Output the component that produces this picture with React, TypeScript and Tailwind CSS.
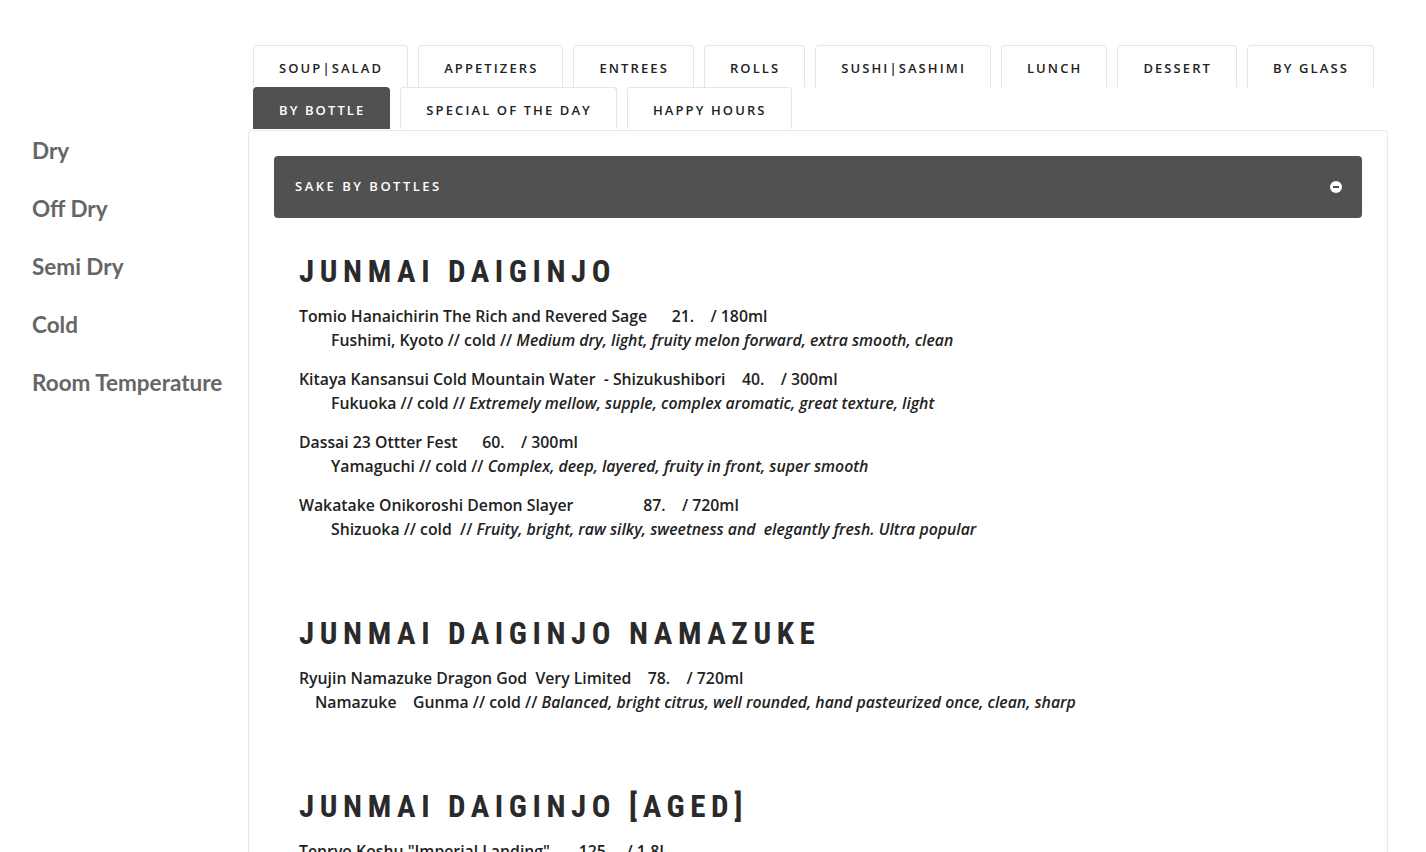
import React from 'react';

const tabs = [
  'SOUP|SALAD',
  'APPETIZERS',
  'ENTREES',
  'ROLLS',
  'SUSHI|SASHIMI',
  'LUNCH',
  'DESSERT',
  'BY GLASS',
  'BY BOTTLE',
  'SPECIAL OF THE DAY',
  'HAPPY HOURS',
];

const filters = ['Dry', 'Off Dry', 'Semi Dry', 'Cold', 'Room Temperature'];

type Item = {
  title: string;
  origin: string;
  notes: string;
  indent?: string;
};

const sections: { name: string; items: Item[] }[] = [
  {
    name: 'JUNMAI DAIGINJO',
    items: [
      {
        title: 'Tomio Hanaichirin The Rich and Revered Sage      21.    / 180ml',
        origin: 'Fushimi, Kyoto // cold // ',
        notes: 'Medium dry, light, fruity melon forward, extra smooth, clean',
      },
      {
        title: 'Kitaya Kansansui Cold Mountain Water  - Shizukushibori    40.    / 300ml',
        origin: 'Fukuoka // cold // ',
        notes: 'Extremely mellow, supple, complex aromatic, great texture, light',
      },
      {
        title: 'Dassai 23 Ottter Fest      60.    / 300ml',
        origin: 'Yamaguchi // cold // ',
        notes: 'Complex, deep, layered, fruity in front, super smooth',
      },
      {
        title: 'Wakatake Onikoroshi Demon Slayer                 87.    / 720ml',
        origin: 'Shizuoka // cold  // ',
        notes: 'Fruity, bright, raw silky, sweetness and  elegantly fresh. Ultra popular',
      },
    ],
  },
  {
    name: 'JUNMAI DAIGINJO NAMAZUKE',
    items: [
      {
        title: 'Ryujin Namazuke Dragon God  Very Limited    78.    / 720ml',
        origin: 'Namazuke    Gunma // cold // ',
        notes: 'Balanced, bright citrus, well rounded, hand pasteurized once, clean, sharp',
        indent: 'pl-4',
      },
    ],
  },
  {
    name: 'JUNMAI DAIGINJO [AGED]',
    items: [
      {
        title: 'Tenryo Koshu "Imperial Landing"       125.    / 1.8L',
        origin: 'Gifu // cold // ',
        notes: 'Aged, rich, deep, layered and complex',
      },
    ],
  },
];

const MinusCircle = () => (
  <svg width="12" height="12" viewBox="0 0 12 12">
    <circle cx="6" cy="6" r="6" fill="#ffffff" />
    <rect x="3" y="5" width="6" height="2" fill="#515151" />
  </svg>
);

export default function App(): React.JSX.Element {
  return (
    <div className="flex h-[852px] overflow-hidden bg-white font-['Open_Sans',sans-serif] text-[#333]">
      <aside className="w-[248px] shrink-0 pt-[135px] pl-8">
        <ul className="flex flex-col gap-[26px]">
          {filters.map(f => (
            <li
              key={f}
              className="font-['Lato',sans-serif] text-[22.5px] leading-[32px] font-bold text-[#666]"
            >
              {f}
            </li>
          ))}
        </ul>
      </aside>

      <main className="mr-[38px] flex-1 pt-[45px]">
        <ul className="mr-[-12px] ml-[5px] flex flex-wrap">
          {tabs.map(t => (
            <li
              key={t}
              className={
                t === 'BY BOTTLE'
                  ? 'mr-[10px] h-[42px] rounded-t-[4px] border border-b-0 border-[#515151] bg-[#515151] pt-[3px] pr-[24px] pl-[25px] text-[13px] leading-[38px] font-semibold tracking-[2.1px] text-white'
                  : 'mr-[10px] h-[42px] rounded-t-[4px] border border-b-0 border-[#e6e6e6] bg-white pt-[3px] pr-[24px] pl-[25px] text-[13px] leading-[38px] font-semibold tracking-[2.1px] text-[#222]'
              }
            >
              {t}
            </li>
          ))}
        </ul>

        <section className="mt-px h-full rounded-[4px] border border-[#e8e8e8] p-[25px]">
          <div className="flex h-[62px] items-center justify-between rounded-[4px] bg-[#515151] pr-5 pl-[21px]">
            <span className="text-[13px] font-semibold tracking-[2.5px] text-white">
              SAKE BY BOTTLES
            </span>
            <MinusCircle />
          </div>

          <div className="px-[25px] pt-[37px]">
            {sections.map((s, i) => (
              <div key={s.name} className={i > 0 ? 'mt-[76px]' : ''}>
                <h2 className="font-['Roboto',sans-serif] text-[31px] leading-[34px] font-bold tracking-[5.6px] text-[#2a2a2a] font-stretch-condensed">
                  {s.name}
                </h2>
                <div className="mt-[15px] flex flex-col gap-[15px]">
                  {s.items.map(it => (
                    <div
                      key={it.title}
                      className="text-[15.8px] leading-[24px] font-semibold whitespace-pre text-[#222]"
                    >
                      <div>{it.title}</div>
                      <div className={it.indent ?? 'pl-8'}>
                        {it.origin}
                        <em>{it.notes}</em>
                      </div>
                    </div>
                  ))}
                </div>
              </div>
            ))}
          </div>
        </section>
      </main>
    </div>
  );
}
